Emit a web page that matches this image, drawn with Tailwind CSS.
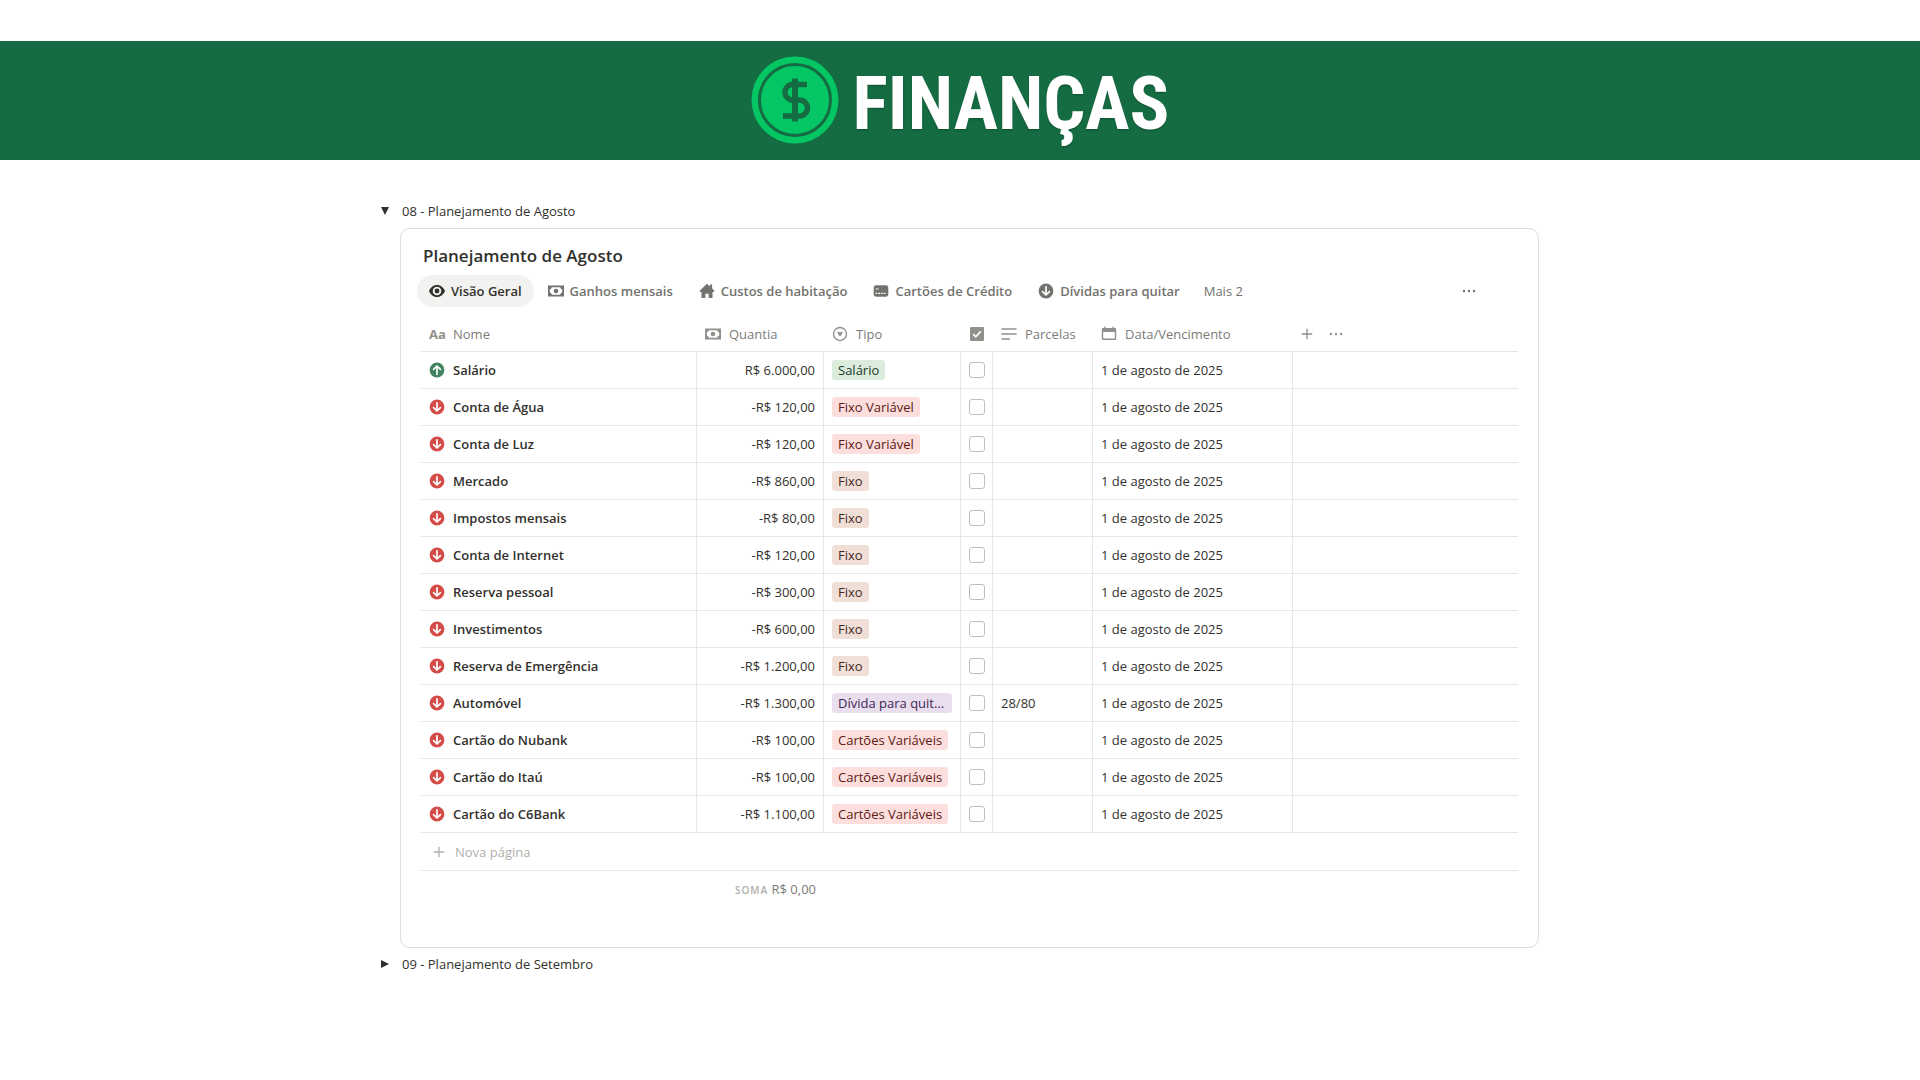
<!DOCTYPE html>
<html lang="pt-BR">
<head>
    <meta charset="UTF-8">
    <meta name="viewport" content="width=device-width, initial-scale=1.0">
    <title>Finanças</title>
    <script src="https://cdn.jsdelivr.net/npm/@tailwindcss/browser@4"></script>
</head>
<body class="min-h-screen bg-white pt-[41px] font-['Open_Sans','Noto_Sans',sans-serif] text-[13px] leading-5 text-[#32302c]">

    <!-- Shared icons -->
    <svg class="hidden" aria-hidden="true">
        <symbol id="i-eye" viewBox="0 0 16 16">
            <path fill="currentColor" fill-rule="evenodd" d="M8 2C4.200 2 1.200 4.700 0 8c1.200 3.300 4.200 6 8 6s6.800-2.700 8-6c-1.200-3.300-4.200-6-8-6Zm0 1.700a4.300 4.300 0 1 1 0 8.600 4.300 4.300 0 0 1 0-8.600Z"/>
            <circle cx="8" cy="8" r="2.400" fill="currentColor"/>
        </symbol>
        <symbol id="i-cash" viewBox="0 0 16 16">
            <path fill="currentColor" fill-rule="evenodd" d="M0 2.500h16v11H0v-11Zm3.800 1.800A2.600 2.600 0 0 1 1.800 6.500v3a2.600 2.600 0 0 1 2 2.200h8.400a2.600 2.600 0 0 1 2-2.200v-3a2.600 2.600 0 0 1-2-2.200H3.800Z"/>
            <circle cx="8" cy="8" r="2.300" fill="currentColor"/>
        </symbol>
        <symbol id="i-home" viewBox="0 0 16 16">
            <path fill="currentColor" d="M8 .8 10.900 3.500V1.600h2.200v4l2.300 2.200-.8 1.100H13.500V15H9.700v-4.300H6.300V15H2.500V8.900H1.300L.6 7.800 8 .8Z"/>
        </symbol>
        <symbol id="i-card" viewBox="0 0 16 16">
            <rect x=".7" y="2.300" width="14.600" height="11.400" rx="2.400" fill="currentColor"/>
            <path stroke="#fff" stroke-width=".9" d="M2.500 6h3.200"/>
            <path stroke="#fff" stroke-width="1.200" stroke-dasharray="1.800 .9" d="M2.500 10.300h11"/>
        </symbol>
        <symbol id="i-down" viewBox="0 0 16 16">
            <circle cx="8" cy="8" r="7.400" fill="currentColor"/>
            <path fill="none" stroke="#fff" stroke-width="1.700" stroke-linecap="round" stroke-linejoin="round" d="M8 3.800v8M4.600 8.600 8 12l3.400-3.400"/>
        </symbol>
        <symbol id="i-up" viewBox="0 0 16 16">
            <circle cx="8" cy="8" r="7.400" fill="currentColor"/>
            <path fill="none" stroke="#fff" stroke-width="1.700" stroke-linecap="round" stroke-linejoin="round" d="M8 12.200v-8M4.600 7.400 8 4l3.400 3.400"/>
        </symbol>
        <symbol id="i-select" viewBox="0 0 16 16">
            <circle cx="8" cy="8" r="6.500" fill="none" stroke="currentColor" stroke-width="1.400"/>
            <path fill="currentColor" stroke="currentColor" stroke-width=".8" stroke-linejoin="round" d="M5.500 6.400h5L8 10.200Z"/>
        </symbol>
        <symbol id="i-check" viewBox="0 0 16 16">
            <rect x="1" y="1" width="14" height="14" rx="1" fill="currentColor"/>
            <path fill="none" stroke="#fff" stroke-width="1.700" d="m4.200 8.200 2.600 2.600 5-5.600"/>
        </symbol>
        <symbol id="i-text" viewBox="0 0 16 16">
            <path stroke="currentColor" stroke-width="1.600" stroke-linecap="round" d="M1 3h14M1 8h14M1 13h7.500"/>
        </symbol>
        <symbol id="i-date" viewBox="0 0 16 16">
            <path fill="currentColor" fill-rule="evenodd" d="M3.200.5h1.300V2h7V.5h1.300V2H14a1.200 1.200 0 0 1 1.200 1.200v9.600A1.200 1.200 0 0 1 14 14H2A1.200 1.200 0 0 1 .8 12.800V3.200A1.200 1.200 0 0 1 2 2h1.200V.5ZM2.200 6v6.600h11.600V6H2.200Z"/>
        </symbol>
        <symbol id="i-plus" viewBox="0 0 12 12">
            <path stroke="currentColor" stroke-width="1.300" d="M6 .8v10.400M.8 6h10.400"/>
        </symbol>
        <symbol id="i-dots" viewBox="0 0 14 14">
            <circle cx="2" cy="7" r="1.200" fill="currentColor"/>
            <circle cx="7" cy="7" r="1.200" fill="currentColor"/>
            <circle cx="12" cy="7" r="1.200" fill="currentColor"/>
        </symbol>
    </svg>

    <!-- Banner -->
    <header class="flex h-[119px] items-center justify-center gap-3.5 bg-[#156b42] pb-0.5">
        <svg class="size-[88px]" viewBox="0 0 88 88" fill="none" aria-hidden="true">
            <circle cx="44" cy="44" r="43.500" fill="#05c665"/>
            <circle cx="44" cy="44" r="35.500" stroke="#156b42" stroke-width="3"/>
            <path stroke="#156b42" stroke-width="5.500" d="M56 28.500H40a8 8 0 0 0 0 15.500h8.500a8 8 0 0 1 0 16H32"/>
            <path stroke="#156b42" stroke-width="6" d="M44 22.500v43"/>
        </svg>
        <h1 class="pt-2 font-['Roboto_Condensed',Roboto,sans-serif] text-[74px] leading-none font-bold text-white text-shadow-sm">FINANÇAS</h1>
    </header>

    <main class="mx-auto max-w-[1158px] pt-[35px]">
        <details open>
            <summary class="flex h-8 cursor-pointer list-none items-center gap-[13px]">
                <svg class="size-2" viewBox="0 0 8 8" aria-hidden="true"><path fill="currentColor" d="M0 0h8L4 8Z"/></svg>
                08 - Planejamento de Agosto
            </summary>

            <section class="mt-px ml-[19px] rounded-[10px] border border-[#dededd] px-5 pt-[15px] pb-10">
                <h2 class="pl-0.5 text-[17px] leading-6 font-semibold">Planejamento de Agosto</h2>

                <!-- Views -->
                <nav class="mt-[7px] -ml-1 flex items-center gap-0.5 font-semibold text-[#73726e]">
                    <button class="flex h-8 items-center gap-1.5 rounded-full bg-[#f2f2f1] px-3 text-[#32302c]">
                        <svg class="size-4"><use href="#i-eye"/></svg>Visão Geral
                    </button>
                    <button class="flex h-8 items-center gap-1.5 rounded-full px-3">
                        <svg class="size-4"><use href="#i-cash"/></svg>Ganhos mensais
                    </button>
                    <button class="flex h-8 items-center gap-1.5 rounded-full px-3">
                        <svg class="size-4"><use href="#i-home"/></svg>Custos de habitação
                    </button>
                    <button class="flex h-8 items-center gap-1.5 rounded-full px-3">
                        <svg class="size-4"><use href="#i-card"/></svg>Cartões de Crédito
                    </button>
                    <button class="flex h-8 items-center gap-1.5 rounded-full px-3">
                        <svg class="size-4"><use href="#i-down"/></svg>Dívidas para quitar
                    </button>
                    <button class="h-8 px-2.5 font-normal">Mais 2</button>
                    <button class="mr-9 ml-auto p-1.5" aria-label="Mais opções">
                        <svg class="size-3.5"><use href="#i-dots"/></svg>
                    </button>
                </nav>

                <table class="mt-[9px] w-full table-fixed border-separate border-spacing-0">
                    <colgroup>
                        <col class="w-[276px]">
                        <col class="w-[127px]">
                        <col class="w-[137px]">
                        <col class="w-8">
                        <col class="w-[100px]">
                        <col class="w-[200px]">
                        <col>
                    </colgroup>
                    <thead>
                        <tr class="text-left text-[#7d7b77] [&>th]:h-9 [&>th]:border-b [&>th]:border-[#e6e6e5] [&>th]:px-2 [&>th]:py-0 [&>th]:font-normal [&_svg]:text-[#91908c]">
                            <th><div class="flex items-center gap-2"><span class="w-4 font-bold text-[#91908c]" aria-hidden="true">Aa</span>Nome</div></th>
                            <th><div class="flex items-center gap-2"><svg class="size-4"><use href="#i-cash"/></svg>Quantia</div></th>
                            <th><div class="flex items-center gap-2"><svg class="size-4"><use href="#i-select"/></svg>Tipo</div></th>
                            <th aria-label="Pago"><svg class="size-4"><use href="#i-check"/></svg></th>
                            <th><div class="flex items-center gap-2"><svg class="size-4"><use href="#i-text"/></svg>Parcelas</div></th>
                            <th><div class="flex items-center gap-2"><svg class="size-4"><use href="#i-date"/></svg>Data/Vencimento</div></th>
                            <th>
                                <div class="flex items-center gap-4">
                                    <button aria-label="Nova propriedade"><svg class="size-3"><use href="#i-plus"/></svg></button>
                                    <button aria-label="Propriedades"><svg class="size-3.5"><use href="#i-dots"/></svg></button>
                                </div>
                            </th>
                        </tr>
                    </thead>
                    <tbody id="rows"></tbody>
                    <tfoot>
                        <tr>
                            <td colspan="7" class="h-[38px] border-b border-[#e6e6e5] px-3 py-0">
                                <button class="flex items-center gap-2.5 text-[#b0afab]">
                                    <svg class="size-3"><use href="#i-plus"/></svg>Nova página
                                </button>
                            </td>
                        </tr>
                        <tr>
                            <td></td>
                            <td class="h-9 px-2 py-0 text-right text-[#7d7b77]">
                                <span class="text-[10px] font-semibold tracking-widest text-[#b0afab]">SOMA</span>
                                R$ 0,00
                            </td>
                            <td colspan="5"></td>
                        </tr>
                    </tfoot>
                </table>
            </section>
        </details>

        <details>
            <summary class="flex h-8 cursor-pointer list-none items-center gap-[13px]">
                <svg class="size-2" viewBox="0 0 8 8" aria-hidden="true"><path fill="currentColor" d="M0 0v8l8-4Z"/></svg>
                09 - Planejamento de Setembro
            </summary>
        </details>
    </main>

    <script>
        // Tag colours
        const tags = {
            'Salário': 'bg-[#dbecdd] text-[#1c3829]',
            'Fixo Variável': 'bg-[#fcdfdc] text-[#5d1715]',
            'Fixo': 'bg-[#efdfd6] text-[#442a1e]',
            'Dívida para quitar': 'bg-[#e8deee] text-[#412454]',
            'Cartões Variáveis': 'bg-[#fcdfdc] text-[#5d1715]',
        };

        // name, amount, type, installments
        const items = [
            ['Salário', 'R$ 6.000,00', 'Salário', ''],
            ['Conta de Água', '-R$ 120,00', 'Fixo Variável', ''],
            ['Conta de Luz', '-R$ 120,00', 'Fixo Variável', ''],
            ['Mercado', '-R$ 860,00', 'Fixo', ''],
            ['Impostos mensais', '-R$ 80,00', 'Fixo', ''],
            ['Conta de Internet', '-R$ 120,00', 'Fixo', ''],
            ['Reserva pessoal', '-R$ 300,00', 'Fixo', ''],
            ['Investimentos', '-R$ 600,00', 'Fixo', ''],
            ['Reserva de Emergência', '-R$ 1.200,00', 'Fixo', ''],
            ['Automóvel', '-R$ 1.300,00', 'Dívida para quitar', '28/80'],
            ['Cartão do Nubank', '-R$ 100,00', 'Cartões Variáveis', ''],
            ['Cartão do Itaú', '-R$ 100,00', 'Cartões Variáveis', ''],
            ['Cartão do C6Bank', '-R$ 1.100,00', 'Cartões Variáveis', ''],
        ];

        document.getElementById('rows').innerHTML = items.map(([name, amount, type, parts]) => {
            const icon = amount.startsWith('-')
                ? '<svg class="size-4 text-[#d44c47]"><use href="#i-down"/></svg>'
                : '<svg class="size-4 text-[#448361]"><use href="#i-up"/></svg>';
            return `
                <tr class="[&>td]:h-[37px] [&>td]:border-b [&>td]:border-[#e6e6e5] [&>td]:px-2 [&>td]:py-0 [&>td:not(:last-child)]:border-r">
                    <td><div class="flex items-center gap-2 font-semibold">${icon}${name}</div></td>
                    <td class="text-right">${amount}</td>
                    <td><div class="w-fit max-w-full truncate rounded-[3px] px-1.5 ${tags[type]}">${type}</div></td>
                    <td><input type="checkbox" aria-label="${name} pago" class="block size-4 appearance-none rounded-[3px] border border-[#c0bfbc] checked:bg-[#2383e2]"></td>
                    <td>${parts}</td>
                    <td>1 de agosto de 2025</td>
                    <td></td>
                </tr>`;
        }).join('');
    </script>
</body>
</html>
